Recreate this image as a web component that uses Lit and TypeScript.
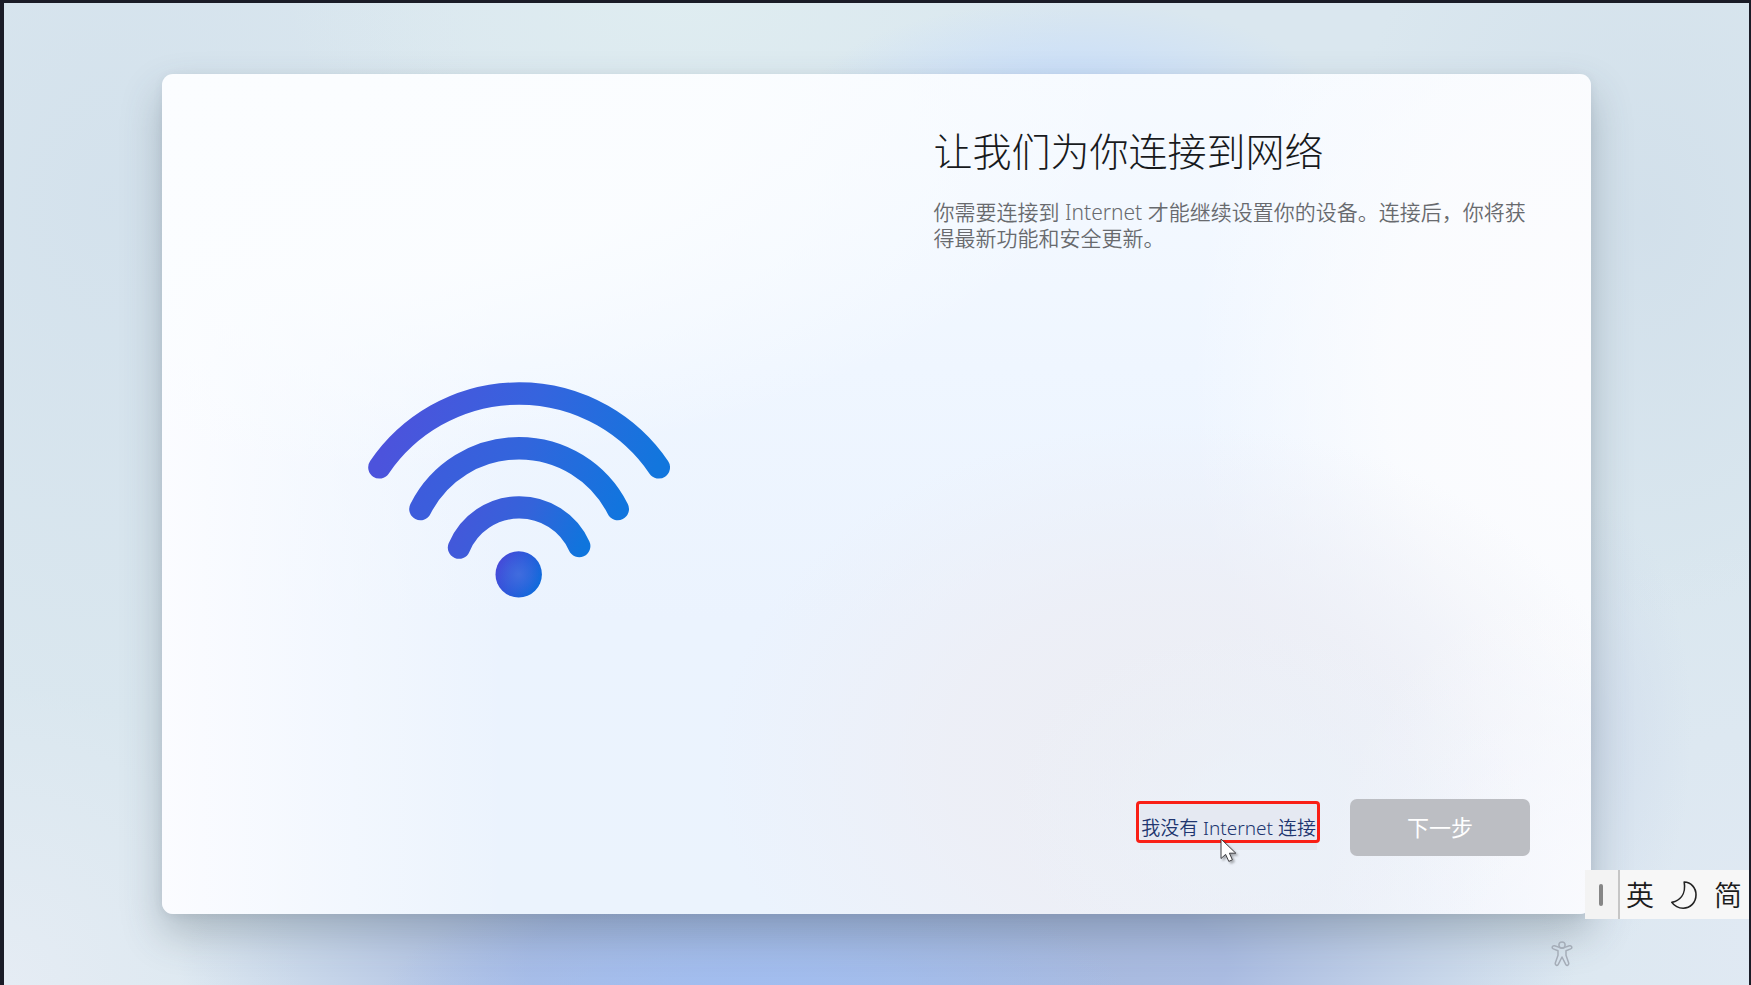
import { LitElement, html, css } from "lit";
import { customElement } from "lit/decorators.js";

const sans = css`"Noto Sans", "Noto Sans CJK SC", sans-serif`;

@customElement("wifi-art")
class WifiArt extends LitElement {
  static styles = css`
    :host { display: block; line-height: 0; }
    svg { width: 302px; height: 216px; }
  `;
  render() {
    return html`
      <svg viewBox="0 0 302 216" fill="none" stroke-width="22.4" stroke-linecap="round" aria-hidden="true">
        <defs>
          <linearGradient id="outer" gradientUnits="userSpaceOnUse" x1="30" y1="20" x2="285" y2="100">
            <stop offset="0" stop-color="#4c53dc" /><stop offset="0.5" stop-color="#3564de" /><stop offset="1" stop-color="#1276dd" />
          </linearGradient>
          <linearGradient id="middle" gradientUnits="userSpaceOnUse" x1="40" y1="60" x2="250" y2="135">
            <stop offset="0" stop-color="#4159dc" /><stop offset="0.5" stop-color="#3265dc" /><stop offset="1" stop-color="#1175de" />
          </linearGradient>
          <linearGradient id="inner" gradientUnits="userSpaceOnUse" x1="95" y1="125" x2="212" y2="172">
            <stop offset="0" stop-color="#4358da" /><stop offset="0.5" stop-color="#3463da" /><stop offset="1" stop-color="#0f75dd" />
          </linearGradient>
          <linearGradient id="dot" gradientUnits="userSpaceOnUse" x1="130" y1="182" x2="172" y2="202">
            <stop offset="0" stop-color="#4549d9" /><stop offset="1" stop-color="#0d6bdb" />
          </linearGradient>
          <radialGradient id="shine" gradientUnits="userSpaceOnUse" cx="150.7" cy="192.4" r="23">
            <stop offset="0" stop-color="#4a74e0" stop-opacity="0.7" /><stop offset="1" stop-color="#4a74e0" stop-opacity="0" />
          </radialGradient>
        </defs>
        <path stroke="url(#outer)" d="M11.4 85.4A169 169 0 0 1 290.8 85.4" />
        <path stroke="url(#middle)" d="M52.4 127A110.5 110.5 0 0 1 249.8 127" />
        <path stroke="url(#inner)" d="M91 165.6A65.5 65.5 0 0 1 211.2 164" />
        <circle cx="150.7" cy="192.4" r="23.2" fill="url(#dot)" />
        <circle cx="150.7" cy="192.4" r="23.2" fill="url(#shine)" />
      </svg>
    `;
  }
}

@customElement("ime-bar")
class ImeBar extends LitElement {
  static styles = css`
    :host { display: flex; height: 49px; background: #f7f7f7; color: #1c1c1c; font-family: ${sans}; }
    .grip { display: flex; align-items: center; justify-content: center; width: 33px; background: #f3f3f3; border-right: 2px solid #c6c6c6; }
    .grip span { width: 4px; height: 22px; border-radius: 2px; background: #868686; }
    .keys { display: flex; align-items: center; gap: 16px; padding: 0 7px 0 6px; }
    button { display: flex; padding: 0; border: 0; background: none; color: inherit; font: 350 28px/36px ${sans}; }
  `;
  render() {
    return html`
      <div class="grip"><span></span></div>
      <div class="keys">
        <button type="button">英</button>
        <button type="button" aria-label="半角">
          <svg width="28" height="30" viewBox="0 0 28 30" fill="none" stroke="#222" stroke-width="1.6" stroke-linejoin="round">
            <path d="M14.2 2C21 2 26 8 26 14.8C26 22.6 20.4 28.2 13.2 28.2C8.6 28.2 4.4 26 1.8 22.4C9.6 20.6 16.2 14.6 14.2 2Z" />
          </svg>
        </button>
        <button type="button">简</button>
      </div>
    `;
  }
}

@customElement("app-root")
class AppRoot extends LitElement {
  static styles = css`
    :host { display: block; font-family: ${sans}; }
    * { box-sizing: border-box; }
    .screen {
      position: relative;
      display: flex;
      min-height: 100vh;
      padding: 71px 158px;
      border: solid #1a1c27;
      border-width: 3px 2px 0 4px;
      background:
        radial-gradient(ellipse 260px 100px at 61% 10%, rgba(194, 218, 252, 0.95) 0%, rgba(199, 221, 251, 0.6) 45%, rgba(210, 228, 246, 0) 100%),
        radial-gradient(ellipse 400px 200px at 39% 0%, rgba(224, 238, 241, 0.8), rgba(222, 236, 243, 0) 100%),
        radial-gradient(ellipse 380px 150px at 43% 103%, #a0bdf2 0%, rgba(162, 190, 240, 0.7) 45%, rgba(175, 195, 238, 0) 100%),
        radial-gradient(ellipse 700px 200px at 50% 98%, #a6b8dc 0%, rgba(166, 184, 224, 0.92) 50%, rgba(196, 208, 230, 0) 100%),
        radial-gradient(ellipse 100px 230px at 91% 74%, rgba(206, 218, 235, 0.7), rgba(214, 224, 238, 0) 100%),
        radial-gradient(ellipse 300px 300px at 0% 100%, #e5ecf4, rgba(226, 235, 243, 0) 100%),
        radial-gradient(ellipse 300px 400px at 100% 95%, #e0e9f3, rgba(222, 232, 242, 0) 100%),
        radial-gradient(ellipse 380px 520px at 6% 20%, rgba(211, 225, 236, 0.9), rgba(214, 228, 237, 0) 100%),
        radial-gradient(ellipse 300px 400px at 94% 22%, rgba(209, 223, 234, 0.9), rgba(214, 228, 237, 0) 100%),
        #dae7ef;
    }
    .card {
      flex: 1;
      display: grid;
      grid-template-columns: 1fr 1fr;
      border-radius: 11px;
      box-shadow: 0 20px 40px rgba(60, 75, 90, 0.3), 0 2px 10px rgba(60, 75, 90, 0.08);
      background:
        radial-gradient(ellipse 260px 190px at 77% 88%, rgba(235, 242, 250, 0.8), rgba(236, 241, 249, 0) 100%),
        radial-gradient(ellipse 300px 360px at 102% 100%, rgba(251, 251, 254, 0.95), rgba(248, 248, 253, 0) 100%),
        radial-gradient(ellipse 460px 340px at 71% 82%, rgba(236, 237, 243, 1) 0%, rgba(237, 238, 245, 0.8) 50%, rgba(241, 243, 250, 0) 100%),
        radial-gradient(ellipse 400px 560px at 100% 36%, rgba(252, 252, 254, 1) 0%, rgba(251, 252, 254, 0.9) 50%, rgba(248, 249, 254, 0) 100%),
        radial-gradient(ellipse 800px 400px at 12% 0%, #fbfdff 0%, rgba(251, 253, 255, 0.9) 50%, rgba(248, 251, 255, 0) 100%),
        linear-gradient(90deg, #fbfcff 0%, rgba(249, 251, 255, 0.8) 7%, rgba(240, 246, 254, 0) 24%),
        linear-gradient(180deg, #f6faff 0%, #eff6ff 35%, #ebf3fe 65%, #ebf3fd 100%);
    }
    .art { display: flex; align-items: center; justify-content: center; padding-bottom: 8px; }
    .panel { display: flex; flex-direction: column; padding: 51px 61px 58px 57px; }
    h1 { margin: 0; color: #181a1d; font: 300 39px/52px ${sans}; }
    p { margin: 22px 0 0; color: #686a6e; font: 350 21px/26px ${sans}; }
    .actions { display: flex; align-items: flex-start; justify-content: flex-end; gap: 33px; margin-top: auto; }
    .offline {
      position: relative;
      display: flex;
      align-items: center;
      height: 49px;
      margin-top: 2px;
      padding: 5px 1px 0;
      background: #e5e9f2;
      color: #20356f;
      font: 350 19px/24px ${sans};
      text-decoration: none;
      white-space: nowrap;
    }
    .highlight { position: absolute; inset: 0 -3px 7px -4px; border: 3px solid #f91f16; border-radius: 4px; pointer-events: none; }
    .cursor { position: absolute; left: 80px; top: 37px; filter: drop-shadow(2px 2px 1px rgba(0, 0, 0, 0.3)); }
    .next { width: 180px; height: 57px; padding: 0 0 2px; border: 0; border-radius: 7px; background: #bcbec3; color: #fff; font: 400 22px/32px ${sans}; }
    ime-bar { position: absolute; right: 0; bottom: 66px; }
    .access { position: absolute; right: 176px; bottom: 18px; padding: 0; border: 0; background: none; line-height: 0; }
  `;
  render() {
    return html`
      <div class="screen">
        <main class="card">
          <div class="art"><wifi-art></wifi-art></div>
          <section class="panel">
            <h1>让我们为你连接到网络</h1>
            <p>你需要连接到 Internet 才能继续设置你的设备。连接后，你将获得最新功能和安全更新。</p>
            <div class="actions">
              <a class="offline" href="#offline">我没有 Internet 连接
                <span class="highlight"></span>
                <svg class="cursor" width="18" height="25" viewBox="0 0 18 25">
                  <path d="M1 1V20.5L5.6 16.4L8.8 23.4L12.4 21.8L9.4 15.2H15.8Z" fill="#fff" stroke="#3c3c40" stroke-width="1" />
                </svg>
              </a>
              <button class="next" type="button" disabled>下一步</button>
            </div>
          </section>
        </main>
        <ime-bar></ime-bar>
        <button class="access" type="button" aria-label="辅助功能">
          <svg width="22" height="26" viewBox="0 0 22 26" fill="none" stroke="#a5adb8" stroke-width="1.5" stroke-linejoin="round">
            <path d="M8.3 6.4L3.6 4.8C1.3 4.1 .3 7.1 2.3 7.9L7 9.8V14.2L4.4 21.8C3.7 24.4 6.5 25.2 7.4 23.2L11 16L14.6 23.2C15.5 25.2 18.3 24.4 17.6 21.8L15 14.2V9.8L19.7 7.9C21.7 7.1 20.7 4.1 18.4 4.8L13.7 6.4C12.2 7.4 9.8 7.4 8.3 6.4Z" />
            <circle cx="11" cy="4" r="3.1" />
          </svg>
        </button>
      </div>
    `;
  }
}
